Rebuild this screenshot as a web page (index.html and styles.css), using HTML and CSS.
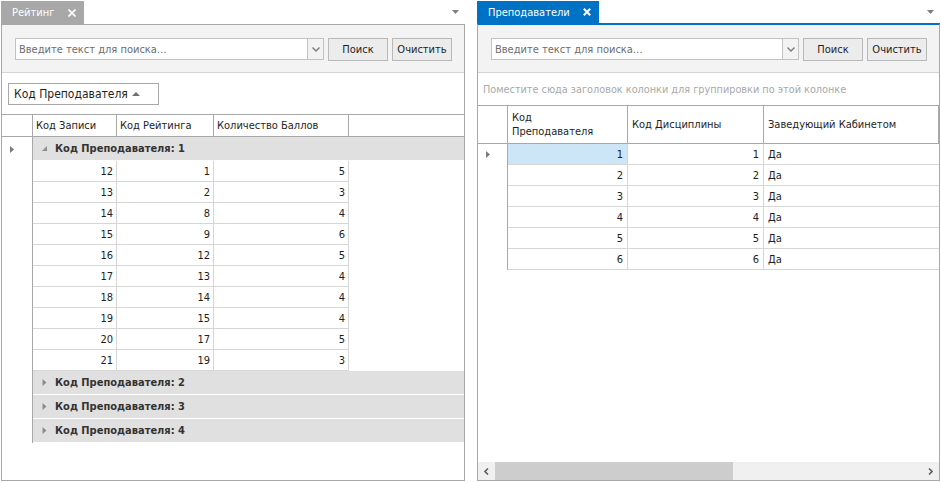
FILE: index.html
```html
<!DOCTYPE html>
<html lang="ru">
<head>
<meta charset="utf-8">
<title>Рейтинг / Преподаватели</title>
<link rel="stylesheet" href="styles.css">
</head>
<body>
<div class="app">
  <section class="dock dock-left">
    <div class="tabbar">
      <div class="tab tab-inactive">
        <span class="tab-title">Рейтинг</span>
        <svg class="tab-x" width="8" height="8" viewBox="0 0 8 8"><path d="M0.5 0.5L7.5 7.5M7.5 0.5L0.5 7.5" stroke="#fff" stroke-width="1.6"/></svg>
      </div>
      <svg class="menu-arrow" width="7" height="4" viewBox="0 0 7 4"><path d="M0 0H7L3.5 4Z" fill="#7f7f7f"/></svg>
    </div>
    <div class="panel">
      <div class="toolbar">
        <div class="search">
          <span class="ph">Введите текст для поиска…</span>
          <span class="dd"><svg width="8" height="5" viewBox="0 0 8 5"><path d="M0.5 0.5L4 4L7.5 0.5" fill="none" stroke="#7a7a7a" stroke-width="1.4"/></svg></span>
        </div>
        <div class="btn">Поиск</div>
        <div class="btn">Очистить</div>
      </div>
      <div class="grouppanel gp-left">
        <div class="chip">Код Преподавателя <svg class="sort" width="8" height="4" viewBox="0 0 8 4"><path d="M0 4H8L4 0Z" fill="#6f6f6f"/></svg></div>
      </div>
      <div class="grid grid-left">
        <div class="row hdr">
          <div class="ind"></div>
          <div class="c c1">Код Записи</div>
          <div class="c c2">Код Рейтинга</div>
          <div class="c c3">Количество Баллов</div>
          <div class="fill"></div>
        </div>
        <div class="row grp">
          <div class="ind"><svg width="4" height="7" viewBox="0 0 4 7"><path d="M0 0L4 3.5L0 7Z" fill="#7a7a7a"/></svg></div>
          <div class="gcell"><svg class="gic" width="5" height="5" viewBox="0 0 5 5"><path d="M5 0V5H0Z" fill="#8c8c8c"/></svg><b>Код Преподавателя: 1</b></div>
        </div>
        <div class="row dat"><div class="ind"></div><div class="c c1 num">12</div><div class="c c2 num">1</div><div class="c c3 num">5</div></div>
        <div class="row dat"><div class="ind"></div><div class="c c1 num">13</div><div class="c c2 num">2</div><div class="c c3 num">3</div></div>
        <div class="row dat"><div class="ind"></div><div class="c c1 num">14</div><div class="c c2 num">8</div><div class="c c3 num">4</div></div>
        <div class="row dat"><div class="ind"></div><div class="c c1 num">15</div><div class="c c2 num">9</div><div class="c c3 num">6</div></div>
        <div class="row dat"><div class="ind"></div><div class="c c1 num">16</div><div class="c c2 num">12</div><div class="c c3 num">5</div></div>
        <div class="row dat"><div class="ind"></div><div class="c c1 num">17</div><div class="c c2 num">13</div><div class="c c3 num">4</div></div>
        <div class="row dat"><div class="ind"></div><div class="c c1 num">18</div><div class="c c2 num">14</div><div class="c c3 num">4</div></div>
        <div class="row dat"><div class="ind"></div><div class="c c1 num">19</div><div class="c c2 num">15</div><div class="c c3 num">4</div></div>
        <div class="row dat"><div class="ind"></div><div class="c c1 num">20</div><div class="c c2 num">17</div><div class="c c3 num">5</div></div>
        <div class="row dat"><div class="ind"></div><div class="c c1 num">21</div><div class="c c2 num">19</div><div class="c c3 num">3</div></div>
        <div class="row grp">
          <div class="ind"></div>
          <div class="gcell"><svg class="gic" width="5" height="7" viewBox="0 0 5 7"><path d="M0.5 0L4.5 3.5L0.5 7Z" fill="#8c8c8c"/></svg><b>Код Преподавателя: 2</b></div>
        </div>
        <div class="row grp">
          <div class="ind"></div>
          <div class="gcell"><svg class="gic" width="5" height="7" viewBox="0 0 5 7"><path d="M0.5 0L4.5 3.5L0.5 7Z" fill="#8c8c8c"/></svg><b>Код Преподавателя: 3</b></div>
        </div>
        <div class="row grp">
          <div class="ind"></div>
          <div class="gcell"><svg class="gic" width="5" height="7" viewBox="0 0 5 7"><path d="M0.5 0L4.5 3.5L0.5 7Z" fill="#8c8c8c"/></svg><b>Код Преподавателя: 4</b></div>
        </div>
      </div>
    </div>
  </section>

  <section class="dock dock-right">
    <div class="tabbar tabbar-active">
      <div class="tab tab-active">
        <span class="tab-title">Преподаватели</span>
        <svg class="tab-x" width="8" height="8" viewBox="0 0 8 8"><path d="M0.8 0.8L7.2 7.2M7.2 0.8L0.8 7.2" stroke="#fff" stroke-width="2"/></svg>
      </div>
      <svg class="menu-arrow" width="7" height="4" viewBox="0 0 7 4"><path d="M0 0H7L3.5 4Z" fill="#7f7f7f"/></svg>
    </div>
    <div class="panel panel-active">
      <div class="toolbar">
        <div class="search">
          <span class="ph">Введите текст для поиска…</span>
          <span class="dd"><svg width="8" height="5" viewBox="0 0 8 5"><path d="M0.5 0.5L4 4L7.5 0.5" fill="none" stroke="#7a7a7a" stroke-width="1.4"/></svg></span>
        </div>
        <div class="btn">Поиск</div>
        <div class="btn">Очистить</div>
      </div>
      <div class="grouppanel gp-right">Поместите сюда заголовок колонки для группировки по этой колонке</div>
      <div class="grid grid-right">
        <div class="row hdr hdr2">
          <div class="ind"></div>
          <div class="c r1">Код<br>Преподавателя</div>
          <div class="c r2">Код Дисциплины</div>
          <div class="c r3">Заведующий Кабинетом</div>
        </div>
        <div class="row dat"><div class="ind"><svg width="4" height="7" viewBox="0 0 4 7"><path d="M0 0L4 3.5L0 7Z" fill="#7a7a7a"/></svg></div><div class="c r1 num sel">1</div><div class="c r2 num">1</div><div class="c r3">Да</div></div>
        <div class="row dat"><div class="ind"></div><div class="c r1 num">2</div><div class="c r2 num">2</div><div class="c r3">Да</div></div>
        <div class="row dat"><div class="ind"></div><div class="c r1 num">3</div><div class="c r2 num">3</div><div class="c r3">Да</div></div>
        <div class="row dat"><div class="ind"></div><div class="c r1 num">4</div><div class="c r2 num">4</div><div class="c r3">Да</div></div>
        <div class="row dat"><div class="ind"></div><div class="c r1 num">5</div><div class="c r2 num">5</div><div class="c r3">Да</div></div>
        <div class="row dat"><div class="ind"></div><div class="c r1 num">6</div><div class="c r2 num">6</div><div class="c r3">Да</div></div>
      </div>
      <div class="hscroll">
        <div class="sbtn"><svg width="5" height="7" viewBox="0 0 5 7"><path d="M4 0.5L1 3.5L4 6.5" fill="none" stroke="#606060" stroke-width="1.6"/></svg></div>
        <div class="thumb"></div>
        <div class="track"></div>
        <div class="sbtn"><svg width="5" height="7" viewBox="0 0 5 7"><path d="M1 0.5L4 3.5L1 6.5" fill="none" stroke="#606060" stroke-width="1.6"/></svg></div>
      </div>
    </div>
  </section>
</div>
</body>
</html>
```
FILE: styles.css
```css
* { box-sizing: border-box; margin: 0; padding: 0; }
html, body { width: 941px; height: 482px; overflow: hidden; background: #fff; }
body { font-family: "DejaVu Sans Condensed", "DejaVu Sans", Tahoma, sans-serif; font-stretch: semi-condensed; font-size: 11px; color: #1e1e1e; }

.app { display: flex; gap: 12px; height: 482px; padding: 1px 0 1px 1px; }
.dock { display: flex; flex-direction: column; }
.dock-left { width: 464px; }
.dock-right { width: 463px; }

.tabbar { display: flex; height: 23px; align-items: stretch; flex: none; }
.tabbar-active { height: 22px; }
.tab { display: flex; align-items: center; color: #fff; padding-left: 11px; }
.tab-inactive { background: #a8a8a8; width: 83px; }
.tab-active { background: #0072c6; width: 122px; }
.tab-x { margin-left: auto; margin-right: 8px; }
.menu-arrow { margin-left: auto; margin-right: 6px; margin-top: 9px; }

.panel { flex: 1; border: 1px solid #a8a8a8; display: flex; flex-direction: column; min-height: 0; }
.panel-active { border-top: 2px solid #0072c6; }

.toolbar { height: 48px; flex: none; background: #f3f3f3; border-bottom: 1px solid #d4d4d4;
  display: flex; align-items: flex-start; gap: 4px; padding: 13px 12px 0 13px; }
.search { flex: 1; height: 22px; background: #fff; border: 1px solid #c2c2c2; display: flex; align-items: stretch; }
.ph { flex: 1; color: #6d6d6d; padding-left: 3px; display: flex; align-items: center; }
.dd { width: 16px; border-left: 1px solid #c2c2c2; background: #f3f3f3; display: flex; align-items: center; justify-content: center; }
.btn { width: 60px; height: 23px; border: 1px solid #b8b8b8; background: #ececec; display: flex; align-items: center; justify-content: center; color: #1e1e1e; }

.grouppanel { flex: none; }
.gp-left { height: 41px; padding: 10px 0 0 6px; }
.chip { width: 151px; height: 22px; border: 1px solid #a8a8a8; display: flex; align-items: center; padding-left: 5px; color: #1e1e1e; font-size: 12px; }
.sort { margin-left: 4px; }
.gp-right { height: 32px; padding-left: 5px; display: flex; align-items: center; color: #a9a9a9; font-size: 10.8px; }

.grid { display: flex; flex-direction: column; }
.grid-right { flex: 1; }
.row { display: flex; }
.ind { flex: none; border-right: 1px solid #a8a8a8; display: flex; align-items: center; padding-left: 8px; }
.grid-left .ind { width: 31px; }
.grid-right .ind { width: 30px; }

.hdr { height: 23px; border-top: 1px solid #a8a8a8; border-bottom: 1px solid #a8a8a8; }
.hdr .c { border-right: 1px solid #a8a8a8; display: flex; align-items: center; padding-left: 3px; }
.hdr2 { height: 39px; }
.hdr2 .c { padding-left: 4px; line-height: 14px; }
.fill { flex: 1; }

.c1 { width: 84px; }
.c2 { width: 97px; }
.c3 { width: 135px; }
.r1 { width: 120px; }
.r2 { width: 136px; }
.r3 { flex: 1; }

.dat { height: 21px; }
.dat .c { border-right: 1px solid #d6d6d6; border-bottom: 1px solid #d6d6d6; display: flex; align-items: center; padding: 0 4px; }
.grid-left .dat .c { padding: 0 3px; }
.dat .r3 { border-right: none; }
.num { justify-content: flex-end; }
.sel { background: #cde6f7; }

.grp { height: 24px; }
.gcell { flex: 1; background: #e0e0e0; border-bottom: 1px solid #fff; display: flex; align-items: center; padding-left: 9px; color: #333; }
.gic { margin-right: 8px; }
.gcell b { font-weight: bold; }

.hscroll { height: 18px; flex: none; display: flex; background: #f0f0f0; }
.sbtn { width: 17px; display: flex; align-items: center; justify-content: center; }
.thumb { width: 238px; background: #cdcdcd; }
.track { flex: 1; }
```
